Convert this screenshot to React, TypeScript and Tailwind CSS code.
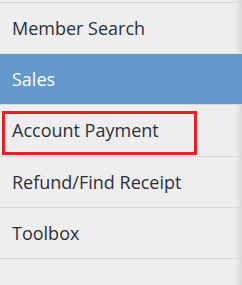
import React from "react";

const items = [
  { label: "Member Search", h: "h-[51px]" },
  { label: "Sales", h: "h-[51px]", active: true },
  { label: "Account Payment", h: "h-[52px]", boxed: true },
  { label: "Refund/Find Receipt", h: "h-[51px]" },
  { label: "Toolbox", h: "h-[51px]" },
];

export default function App() {
  return (
    <div
      className="relative w-[242px] h-[285px] bg-[#eeeeee] pt-[2px] shadow-[inset_-7px_0_6px_-5px_rgba(0,0,0,0.12)] overflow-hidden"
      style={{ fontFamily: '"Open Sans", "Noto Sans", sans-serif' }}
    >
      {items.map((it) => (
        <div
          key={it.label}
          className={`relative flex items-center pl-[12px] border-t border-[#d8d8d8] text-[18px] ${it.h} ${
            it.active ? "bg-[#6399cb] text-white border-[#e4e4e4]" : "text-[#2e2e3a]"
          }`}
        >
          {it.label}
          {it.boxed && (
            <div className="absolute left-[2px] top-[6px] w-[195px] h-[44px] border-[3px] border-[#e8202a]" />
          )}
        </div>
      ))}
      <div className="border-t border-[#d8d8d8]" />
    </div>
  );
}
